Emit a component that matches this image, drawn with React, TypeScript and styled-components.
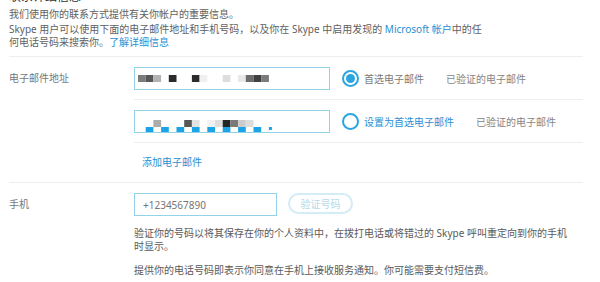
import React from 'react'
import styled, { createGlobalStyle } from 'styled-components'

const GlobalStyle = createGlobalStyle`
  html, body {
    margin: 0;
    padding: 0;
    background: #ffffff;
    overflow: hidden;
  }
  body {
    font-family: "Segoe UI", "Noto Sans", "Noto Sans CJK SC", sans-serif;
    font-size: 10px;
    color: #5f5f5f;
  }
`

const Page = styled.div`
  width: 574px;
  padding-left: 9px;
`

const Heading = styled.h2`
  margin: -10px 0 0 0;
  font-size: 12px;
  line-height: 14px;
  font-weight: 400;
  color: #333;
`

const Intro = styled.div`
  margin-top: 4px;
  width: 480px;
`

const Para = styled.p<{ gap?: number }>`
  margin: ${({ gap }) => gap ?? 0}px 0 0 0;
  line-height: 13px;
`

const Link = styled.a`
  color: #2a8fd4;
  text-decoration: none;
  cursor: pointer;
`

const Section = styled.div<{ offset: number }>`
  display: grid;
  grid-template-columns: 125px 1fr;
  margin-top: ${({ offset }) => offset}px;
  border-top: 1px solid #eceff1;
`

const Label = styled.div`
  padding-top: 15px;
  line-height: 13px;
  color: #777;
`

const Column = styled.div`
  display: flex;
  flex-direction: column;
`

const EmailRow = styled.div`
  display: flex;
  align-items: center;
  padding: 10px 0 9px;
  border-bottom: 1px solid #eceff1;
`

const TextBox = styled.div<{ w: number }>`
  box-sizing: border-box;
  width: ${({ w }) => w}px;
  height: 23px;
  border: 1px solid #93d3ea;
  background: #fff;
  overflow: hidden;
  display: flex;
  align-items: center;
`

const Placeholder = styled.span`
  padding-left: 8px;
  font-size: 10px;
  color: #777;
`

const Radio = styled.span<{ checked?: boolean }>`
  box-sizing: border-box;
  width: 17px;
  height: 17px;
  margin-left: 12px;
  border-radius: 50%;
  border: 2px solid #2aa5df;
  display: flex;
  align-items: center;
  justify-content: center;

  &::after {
    content: '';
    display: ${({ checked }) => (checked ? 'block' : 'none')};
    width: 9px;
    height: 9px;
    border-radius: 50%;
    background: #2aa5df;
  }
`

const RadioText = styled.span<{ active?: boolean }>`
  margin-left: 5px;
  color: ${({ active }) => (active ? '#2a8fd4' : '#7a7a7a')};
`

const Status = styled.span`
  margin-left: 22px;
  color: #858585;
`

const AddRow = styled.div`
  padding: 13px 0 13px 8px;
  line-height: 13px;
`

const PhoneRow = styled.div`
  display: flex;
  align-items: flex-start;
  padding-top: 10px;
`

const PillButton = styled.button`
  box-sizing: border-box;
  width: 65px;
  height: 21px;
  margin-left: 11px;
  padding: 0;
  border: 2px solid #d3ecf6;
  border-radius: 11px;
  background: #fff;
  color: #b7d9e8;
  font: inherit;
  font-size: 10px;
`

const Note = styled.p<{ gap: number }>`
  margin: ${({ gap }) => gap}px 0 0 0;
  width: 440px;
  line-height: 13px;
  color: #5a5a5a;
`

type Cell = [number, string]

const STEP = 7.7

// redacted address, drawn as the blurred mosaic of the screenshot
function Mosaic({ top, cells, under }: { top: number; cells: Cell[]; under?: number[] }) {
  return (
    <svg width="194" height="21" style={{ display: 'block' }}>
      {cells.map(([i, c]) => (
        <rect key={'c' + i} x={3 + i * STEP} y={top} width={STEP} height={7} fill={c} />
      ))}
      {under?.map((i) => (
        <rect
          key={'u' + i}
          x={3 + i * STEP}
          y={top + 7}
          width={i === 17 ? 3 : STEP}
          height={i === 17 ? 3 : 6}
          fill="#1ba3e6"
        />
      ))}
    </svg>
  )
}

const first: Cell[] = [
  [0, '#7b7b7b'],
  [1, '#575757'],
  [2, '#b3b3b3'],
  [4, '#2b2b2b'],
  [7, '#2b2b2b'],
  [8, '#f0f0f0'],
  [11, '#dddddd'],
  [13, '#e8e8e8'],
  [14, '#6c6c6c'],
  [15, '#404040'],
  [16, '#7b7b7b'],
]

const second: Cell[] = [
  [2, '#ababab'],
  [6, '#575757'],
  [7, '#e2e2e2'],
  [9, '#f1f1f1'],
  [10, '#dedede'],
  [11, '#252525'],
  [12, '#7a7a7a'],
  [13, '#cccccc'],
  [14, '#dddddd'],
]

export default function App() {
  return (
    <Page>
      <GlobalStyle />
      <Heading>联系详细信息</Heading>
      <Intro>
        <Para>我们使用你的联系方式提供有关你帐户的重要信息。</Para>
        <Para gap={2}>
          Skype 用户可以使用下面的电子邮件地址和手机号码，以及你在 Skype 中启用发现的{' '}
          <Link>Microsoft 帐户</Link>中的任何电话号码来搜索你。<Link>了解详细信息</Link>
        </Para>
      </Intro>

      <Section offset={7}>
        <Label>电子邮件地址</Label>
        <Column>
          <EmailRow>
            <TextBox w={196}>
              <Mosaic top={7} cells={first} />
            </TextBox>
            <Radio checked />
            <RadioText>首选电子邮件</RadioText>
            <Status>已验证的电子邮件</Status>
          </EmailRow>
          <EmailRow>
            <TextBox w={196}>
              <Mosaic top={9} cells={second} under={[1, 3, 5, 7, 9, 11, 13, 15, 17]} />
            </TextBox>
            <Radio />
            <RadioText active>设置为首选电子邮件</RadioText>
            <Status>已验证的电子邮件</Status>
          </EmailRow>
          <AddRow>
            <Link>添加电子邮件</Link>
          </AddRow>
        </Column>
      </Section>

      <Section offset={0}>
        <Label>手机</Label>
        <Column>
          <PhoneRow>
            <TextBox w={143}>
              <Placeholder>+1234567890</Placeholder>
            </TextBox>
            <PillButton>验证号码</PillButton>
          </PhoneRow>
          <Note gap={11}>
            验证你的号码以将其保存在你的个人资料中，在拨打电话或将错过的 Skype 呼叫重定向到你的手机时显示。
          </Note>
          <Note gap={11}>提供你的电话号码即表示你同意在手机上接收服务通知。你可能需要支付短信费。</Note>
        </Column>
      </Section>
    </Page>
  )
}
